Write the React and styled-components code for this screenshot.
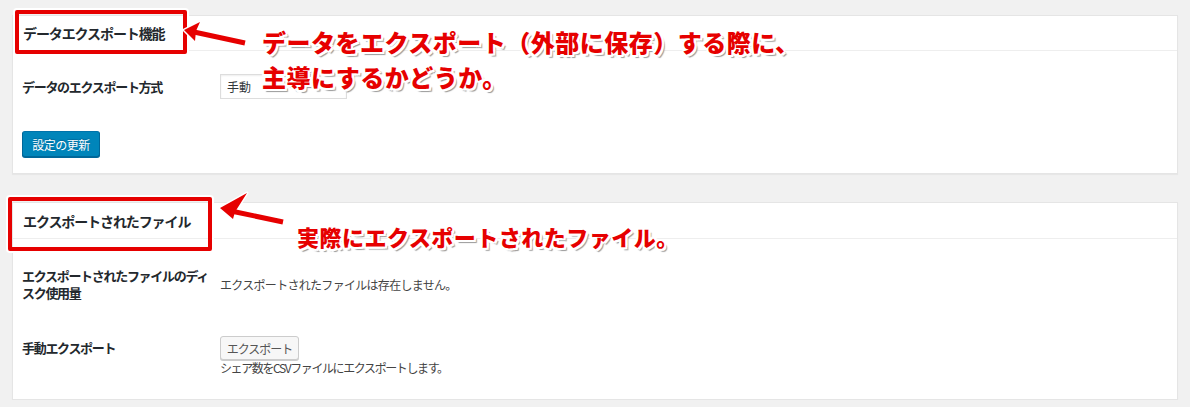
import React from "react";
import styled, { createGlobalStyle } from "styled-components";

const GlobalStyle = createGlobalStyle`
  html, body {
    margin: 0;
    padding: 0;
    background: #f1f1f1;
  }
  body {
    font-family: "Noto Sans CJK JP", "Noto Sans", sans-serif;
    color: #23282d;
  }
`;

const RED = "#e60000";

export default function App() {
  return (
    <>
      <GlobalStyle />
      <Page>
        <Panel>
          <PanelTitle>データエクスポート機能</PanelTitle>
          <PanelBody $bottom={16}>
            <Row $top={23} $align="center">
              <Label>データのエクスポート方式</Label>
              <Field>
                <Select>
                  <span>手動</span>
                </Select>
              </Field>
            </Row>
            <PrimaryButton>設定の更新</PrimaryButton>
          </PanelBody>

          <Highlight $left={2} $top={-6} $width={172} $height={44} />
          <Arrow>
            <line x1="181" y1="16" x2="232" y2="27" stroke="#fff" strokeWidth="8" strokeLinecap="round" />
            <polygon points="171,14 187,6 183,15 182,25" fill="#fff" stroke="#fff" strokeWidth="3" strokeLinejoin="round" />
            <line x1="181" y1="16" x2="232" y2="27" stroke={RED} strokeWidth="5" />
            <polygon points="171,14 187,6 183,15 182,25" fill={RED} />
          </Arrow>
          <Note $left={249} $top={8} $size={24}>
            データをエクスポート（外部に保存）する際に、
            <br />
            主導にするかどうか。
          </Note>
        </Panel>

        <Panel>
          <PanelTitle $tall>エクスポートされたファイル</PanelTitle>
          <PanelBody $bottom={23}>
            <Row $top={28} $align="center">
              <Label>
                エクスポートされたファイルのディ
                <br />
                スク使用量
              </Label>
              <Value>エクスポートされたファイルは存在しません。</Value>
            </Row>
            <Row $top={35} $align="start">
              <Label $offset={3}>手動エクスポート</Label>
              <Field>
                <SecondaryButton>エクスポート</SecondaryButton>
                <Description>シェア数をCSVファイルにエクスポートします。</Description>
              </Field>
            </Row>
          </PanelBody>

          <Highlight $left={-5} $top={-6} $width={204} $height={54} />
          <Arrow>
            <line x1="218" y1="8" x2="270" y2="19" stroke="#fff" strokeWidth="8" strokeLinecap="round" />
            <polygon points="207,5 234,-10 222,9 220,16" fill="#fff" stroke="#fff" strokeWidth="3" strokeLinejoin="round" />
            <line x1="218" y1="8" x2="270" y2="19" stroke={RED} strokeWidth="5" />
            <polygon points="207,5 234,-10 222,9 220,16" fill={RED} />
          </Arrow>
          <Note $left={284} $top={16} $size={22}>
            実際にエクスポートされたファイル。
          </Note>
        </Panel>
      </Page>
    </>
  );
}

const Page = styled.div`
  padding: 15px 12px 0;
  display: flex;
  flex-direction: column;
  gap: 28px;
`;

const Panel = styled.section`
  position: relative;
  background: #fff;
  border: 1px solid #e5e5e5;
  box-shadow: 0 1px 1px rgba(0, 0, 0, 0.04);
`;

const PanelTitle = styled.h2`
  margin: 0;
  height: ${(p) => (p.$tall ? 35 : 34)}px;
  padding: 0 10px;
  display: flex;
  align-items: center;
  font-size: 14px;
  font-weight: 700;
  letter-spacing: -1.1px;
  color: #23282d;
  border-bottom: 1px solid #eee;
`;

const PanelBody = styled.div`
  padding: 0 10px ${(p) => p.$bottom}px 9px;
`;

const Row = styled.div`
  display: grid;
  grid-template-columns: 198px 1fr;
  align-items: ${(p) => p.$align};
  padding-top: ${(p) => p.$top}px;
`;

const Label = styled.div`
  font-size: 13px;
  font-weight: 700;
  line-height: 17px;
  letter-spacing: -1.3px;
  color: #23282d;
  margin-top: ${(p) => p.$offset || 0}px;
`;

const Field = styled.div`
  display: flex;
  flex-direction: column;
  align-items: flex-start;
`;

const Value = styled.div`
  font-size: 12px;
  letter-spacing: -0.7px;
  color: #444;
`;

const Select = styled.div`
  box-sizing: border-box;
  width: 127px;
  height: 25px;
  padding: 0 6px;
  display: flex;
  align-items: center;
  font-size: 12px;
  color: #32373c;
  background: #fff;
  border: 1px solid #ddd;
  box-shadow: inset 0 1px 2px rgba(0, 0, 0, 0.07);
`;

const PrimaryButton = styled.button`
  box-sizing: border-box;
  margin-top: 32px;
  height: 26px;
  width: 78px;
  padding: 0;
  font-family: inherit;
  font-size: 12px;
  letter-spacing: -0.5px;
  color: #fff;
  background: #0085ba;
  border: 1px solid;
  border-color: #0073aa #006799 #006799;
  border-radius: 3px;
  box-shadow: 0 1px 0 #006799;
  text-shadow: 0 -1px 1px #006799;
`;

const SecondaryButton = styled.button`
  box-sizing: border-box;
  height: 24px;
  width: 79px;
  padding: 0;
  font-family: inherit;
  font-size: 12px;
  letter-spacing: -1px;
  color: #555;
  background: #f7f7f7;
  border: 1px solid #ccc;
  border-radius: 3px;
  box-shadow: 0 1px 0 #ccc;
`;

const Description = styled.div`
  font-size: 12px;
  line-height: 16px;
  letter-spacing: -1.4px;
  color: #444;
`;

const Highlight = styled.div`
  position: absolute;
  box-sizing: border-box;
  left: ${(p) => p.$left}px;
  top: ${(p) => p.$top}px;
  width: ${(p) => p.$width}px;
  height: ${(p) => p.$height}px;
  border: 4px solid ${RED};
  border-radius: 2px;
  box-shadow: 0 0 0 2px #fff;
  pointer-events: none;
`;

const Arrow = styled.svg.attrs({ width: 300, height: 60 })`
  position: absolute;
  left: 0;
  top: 0;
  overflow: visible;
  pointer-events: none;
`;

const Note = styled.div`
  position: absolute;
  left: ${(p) => p.$left}px;
  top: ${(p) => p.$top}px;
  font-size: ${(p) => p.$size}px;
  line-height: 35px;
  font-weight: 900;
  letter-spacing: 0.5px;
  white-space: nowrap;
  color: ${RED};
  text-shadow:
    2px 0 0 #fff, -2px 0 0 #fff, 0 2px 0 #fff, 0 -2px 0 #fff,
    2px 2px 0 #fff, -2px -2px 0 #fff, 2px -2px 0 #fff, -2px 2px 0 #fff,
    3px 3px 1px #999;
`;
